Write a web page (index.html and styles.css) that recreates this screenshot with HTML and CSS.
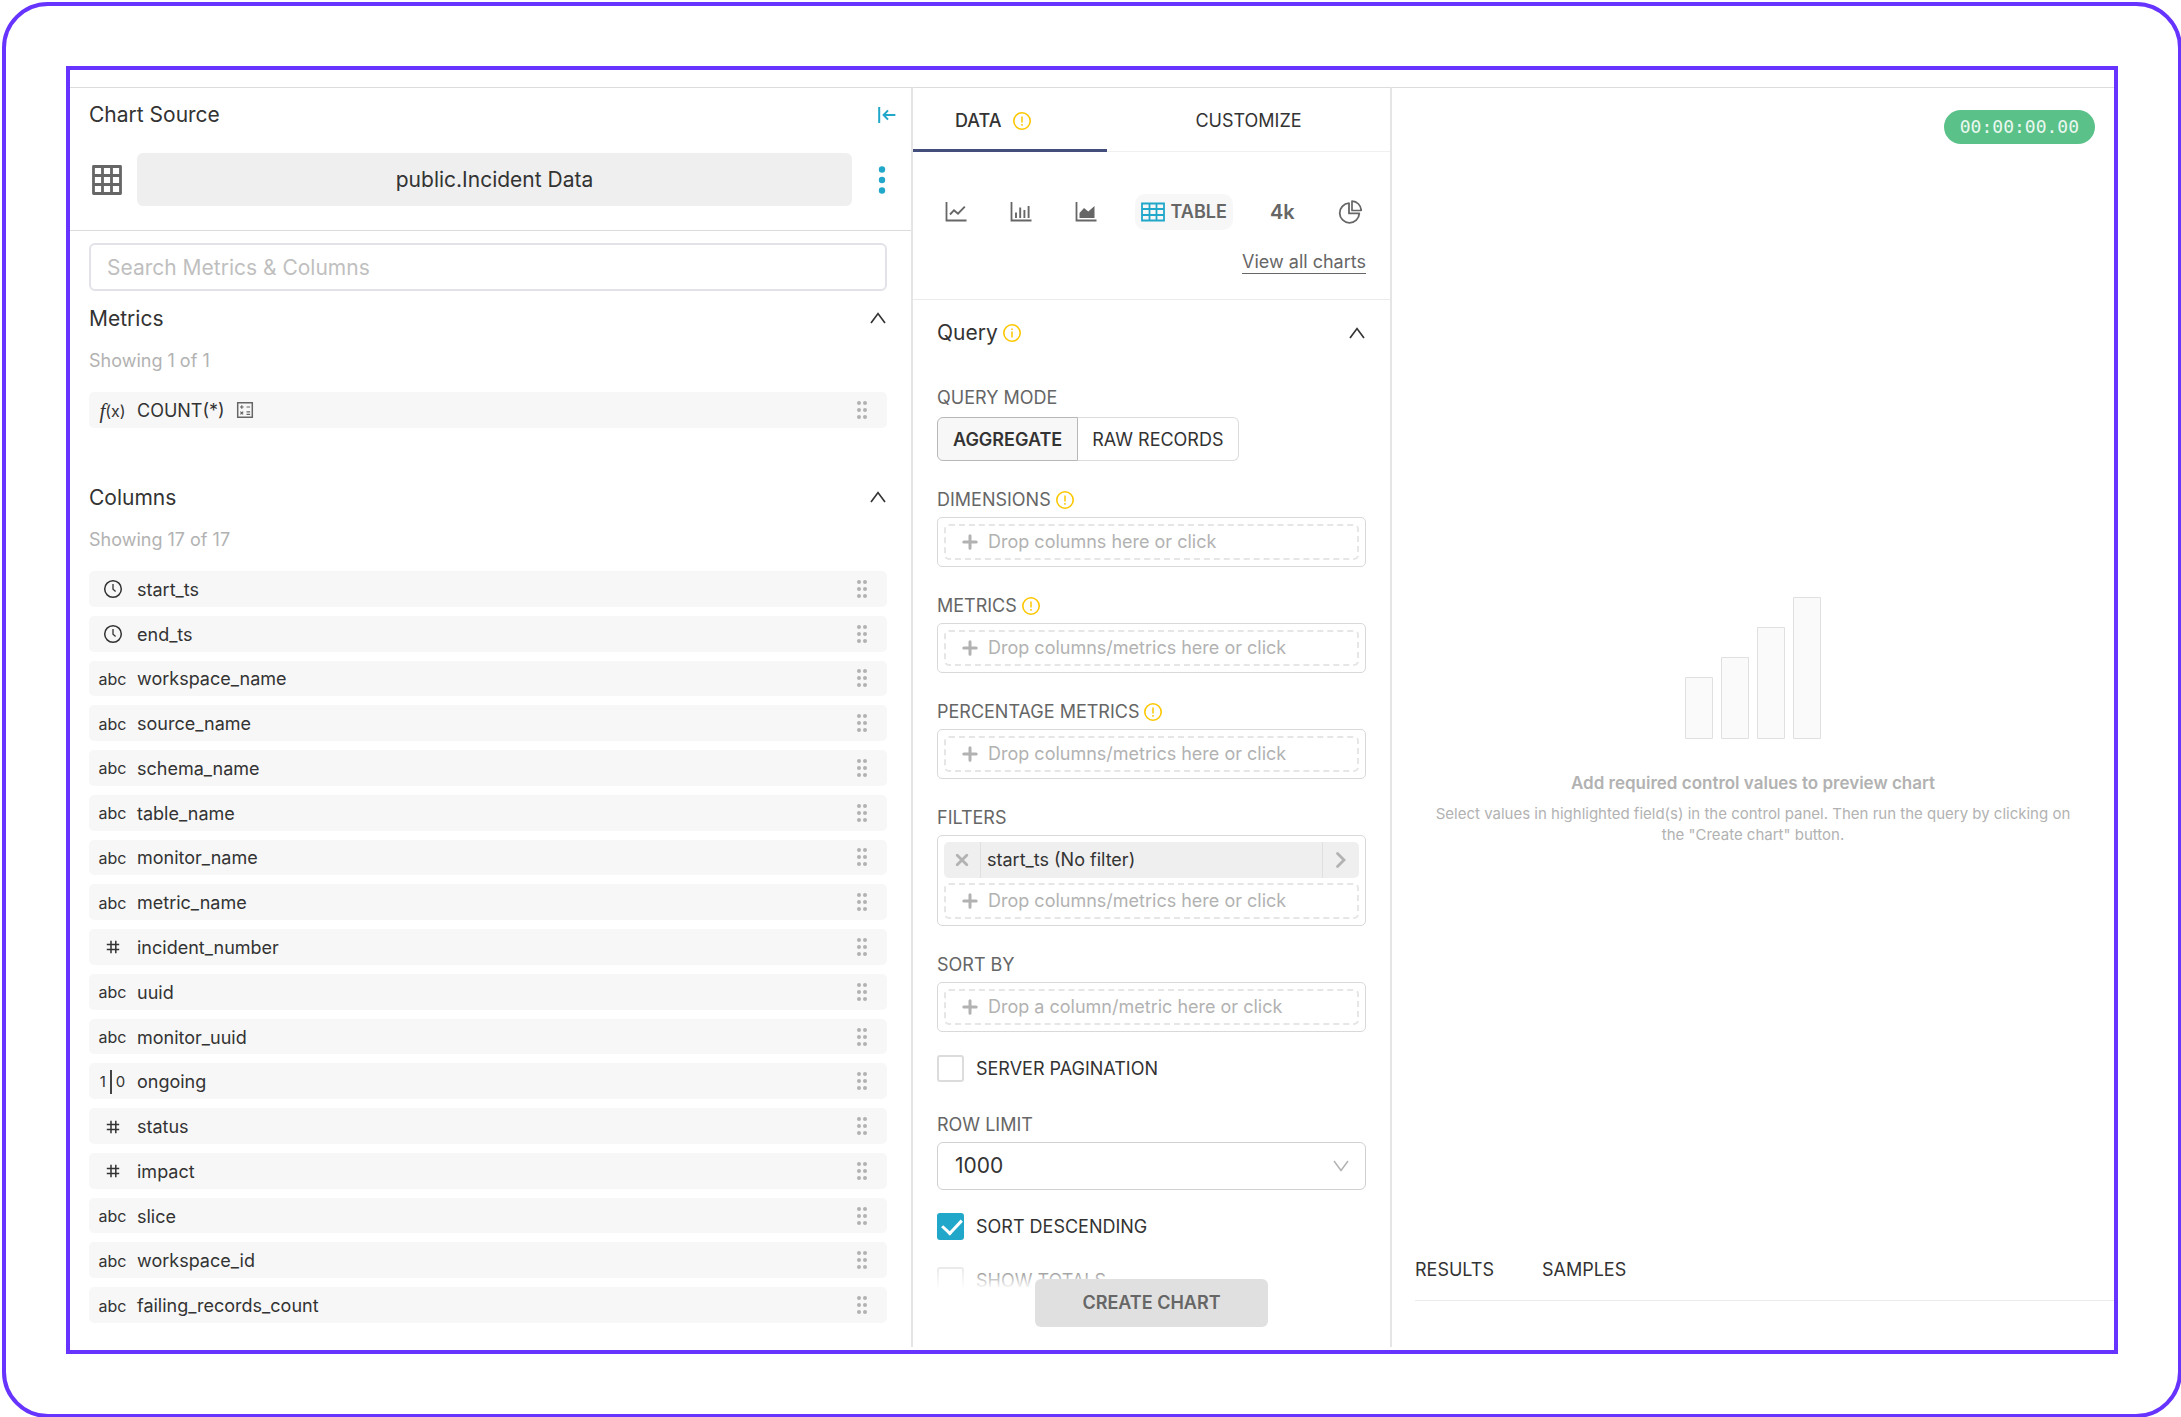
FILE: index.html
```html
<!DOCTYPE html>
<html lang="en">
<head>
  <meta charset="UTF-8">
  <meta name="viewport" content="width=device-width, initial-scale=1.0">
  <title>Create Chart</title>
  <link rel="stylesheet" href="styles.css">
</head>
<body>
  <!-- Shared icons -->
  <svg class="icon-defs" aria-hidden="true">
    <symbol id="icon-clock" viewBox="0 0 20 20">
      <circle cx="10" cy="10" r="8.3" fill="none" stroke="currentColor" stroke-width="1.5"/>
      <path d="M10 5v5.3l2.6 2.2" fill="none" stroke="currentColor" stroke-width="1.3"/>
    </symbol>
    <symbol id="icon-hash" viewBox="0 0 14 14">
      <path d="M5 .8v12.4M9.8 .8v12.4M.8 4.6h12.4M.8 9.4h12.4" fill="none" stroke="currentColor" stroke-width="1.5"/>
    </symbol>
    <symbol id="icon-drag" viewBox="0 0 12 20">
      <g fill="currentColor">
        <circle cx="3" cy="3" r="2"/><circle cx="9" cy="3" r="2"/>
        <circle cx="3" cy="10" r="2"/><circle cx="9" cy="10" r="2"/>
        <circle cx="3" cy="17" r="2"/><circle cx="9" cy="17" r="2"/>
      </g>
    </symbol>
    <symbol id="icon-up" viewBox="0 0 16 12">
      <path d="M1 11l7-9.4L15 11" fill="none" stroke="currentColor" stroke-width="1.7"/>
    </symbol>
    <symbol id="icon-alert" viewBox="0 0 20 20">
      <circle cx="10" cy="10" r="8.2" fill="none" stroke="currentColor" stroke-width="1.6"/>
      <path d="M10 5.4v6M10 13v1.7" fill="none" stroke="currentColor" stroke-width="1.5"/>
    </symbol>
    <symbol id="icon-info" viewBox="0 0 20 20">
      <circle cx="10" cy="10" r="8.2" fill="none" stroke="currentColor" stroke-width="1.6"/>
      <path d="M10 8.6v6M10 5.4v1.7" fill="none" stroke="currentColor" stroke-width="1.5"/>
    </symbol>
    <symbol id="icon-plus" viewBox="0 0 16 16">
      <path d="M8 1.8v12.4M1.8 8h12.4" fill="none" stroke="currentColor" stroke-width="3" stroke-linecap="round"/>
    </symbol>
  </svg>

  <div class="card">
    <div class="explore">

      <!-- Chart source -->
      <div class="source-panel">
        <div class="source-header">
          <div class="source-title">
            <span>Chart Source</span>
            <button class="icon-button link-color" aria-label="Collapse">
              <svg width="18" height="18" viewBox="0 0 18 18"><path d="M1.2 1v16M17.4 9H6M10 4.4L5.6 9l4.4 4.6" fill="none" stroke="currentColor" stroke-width="2"/></svg>
            </button>
          </div>
          <div class="dataset">
            <svg width="30" height="30" viewBox="0 0 30 30"><path d="M1.5 1.5h27v27h-27zM10.5 1.5v27M19.5 1.5v27M1.5 10.5h27M1.5 19.5h27" fill="none" stroke="#666" stroke-width="2.8" stroke-linejoin="round"/></svg>
            <button class="dataset-name">public.Incident Data</button>
            <button class="icon-button link-color dataset-menu" aria-label="Dataset menu">
              <svg width="8" height="28" viewBox="0 0 8 28"><g fill="currentColor"><circle cx="4" cy="3.5" r="3.2"/><circle cx="4" cy="14" r="3.2"/><circle cx="4" cy="24.5" r="3.2"/></g></svg>
            </button>
          </div>
        </div>

        <div class="source-body">
          <input class="search" type="text" placeholder="Search Metrics &amp; Columns" aria-label="Search Metrics &amp; Columns">

          <div class="section-header">
            <span>Metrics</span>
            <button class="icon-button" aria-label="Toggle metrics"><svg width="16" height="12"><use href="#icon-up"/></svg></button>
          </div>
          <div class="section-count">Showing 1 of 1</div>
          <div class="option-list metrics-list">
            <div class="option">
              <span class="option-type fx"><i>f</i>(x)</span>
              <span class="option-name">COUNT(*)</span>
              <svg class="calc" width="18" height="18" viewBox="0 0 18 18"><path d="M1.7 1.7h14.6v14.6H1.7z" fill="none" stroke="#666" stroke-width="1.5"/><path d="M4 6h3.6M5.8 4.2v3.6M10.5 6h3.6M4.4 10.6l2.8 2.8M7.2 10.6l-2.8 2.8M10.5 10.9h3.6M10.5 13.3h3.6" fill="none" stroke="#666" stroke-width="1.2"/></svg>
              <svg class="drag" width="12" height="20"><use href="#icon-drag"/></svg>
            </div>
          </div>

          <div class="section-header columns-header">
            <span>Columns</span>
            <button class="icon-button" aria-label="Toggle columns"><svg width="16" height="12"><use href="#icon-up"/></svg></button>
          </div>
          <div class="section-count">Showing 17 of 17</div>
          <div class="option-list columns-list">
            <div class="option"><span class="option-type"><svg width="20" height="20"><use href="#icon-clock"/></svg></span><span class="option-name">start_ts</span><svg class="drag" width="12" height="20"><use href="#icon-drag"/></svg></div>
            <div class="option"><span class="option-type"><svg width="20" height="20"><use href="#icon-clock"/></svg></span><span class="option-name">end_ts</span><svg class="drag" width="12" height="20"><use href="#icon-drag"/></svg></div>
            <div class="option"><span class="option-type">abc</span><span class="option-name">workspace_name</span><svg class="drag" width="12" height="20"><use href="#icon-drag"/></svg></div>
            <div class="option"><span class="option-type">abc</span><span class="option-name">source_name</span><svg class="drag" width="12" height="20"><use href="#icon-drag"/></svg></div>
            <div class="option"><span class="option-type">abc</span><span class="option-name">schema_name</span><svg class="drag" width="12" height="20"><use href="#icon-drag"/></svg></div>
            <div class="option"><span class="option-type">abc</span><span class="option-name">table_name</span><svg class="drag" width="12" height="20"><use href="#icon-drag"/></svg></div>
            <div class="option"><span class="option-type">abc</span><span class="option-name">monitor_name</span><svg class="drag" width="12" height="20"><use href="#icon-drag"/></svg></div>
            <div class="option"><span class="option-type">abc</span><span class="option-name">metric_name</span><svg class="drag" width="12" height="20"><use href="#icon-drag"/></svg></div>
            <div class="option"><span class="option-type"><svg width="14" height="14"><use href="#icon-hash"/></svg></span><span class="option-name">incident_number</span><svg class="drag" width="12" height="20"><use href="#icon-drag"/></svg></div>
            <div class="option"><span class="option-type">abc</span><span class="option-name">uuid</span><svg class="drag" width="12" height="20"><use href="#icon-drag"/></svg></div>
            <div class="option"><span class="option-type">abc</span><span class="option-name">monitor_uuid</span><svg class="drag" width="12" height="20"><use href="#icon-drag"/></svg></div>
            <div class="option"><span class="option-type bool"><span>1</span><span class="bar"></span><span>0</span></span><span class="option-name">ongoing</span><svg class="drag" width="12" height="20"><use href="#icon-drag"/></svg></div>
            <div class="option"><span class="option-type"><svg width="14" height="14"><use href="#icon-hash"/></svg></span><span class="option-name">status</span><svg class="drag" width="12" height="20"><use href="#icon-drag"/></svg></div>
            <div class="option"><span class="option-type"><svg width="14" height="14"><use href="#icon-hash"/></svg></span><span class="option-name">impact</span><svg class="drag" width="12" height="20"><use href="#icon-drag"/></svg></div>
            <div class="option"><span class="option-type">abc</span><span class="option-name">slice</span><svg class="drag" width="12" height="20"><use href="#icon-drag"/></svg></div>
            <div class="option"><span class="option-type">abc</span><span class="option-name">workspace_id</span><svg class="drag" width="12" height="20"><use href="#icon-drag"/></svg></div>
            <div class="option"><span class="option-type">abc</span><span class="option-name">failing_records_count</span><svg class="drag" width="12" height="20"><use href="#icon-drag"/></svg></div>
          </div>
        </div>
      </div>

      <!-- Controls -->
      <div class="control-panel">
        <div class="tabs">
          <button class="tab active">DATA <svg class="warn" width="20" height="20"><use href="#icon-alert"/></svg></button>
          <button class="tab">CUSTOMIZE</button>
        </div>

        <div class="chart-picker">
          <div class="chart-types">
            <button class="chart-type" aria-label="Line chart">
              <svg width="22" height="20" viewBox="0 0 22 20"><path d="M1.5 0v18.5h20" fill="none" stroke="currentColor" stroke-width="1.8"/><path d="M5 12.5l4-4.3 4 3.5 6.8-7" fill="none" stroke="currentColor" stroke-width="1.9"/></svg>
            </button>
            <button class="chart-type" aria-label="Bar chart">
              <svg width="22" height="20" viewBox="0 0 22 20"><path d="M1.5 0v18.5h20" fill="none" stroke="currentColor" stroke-width="1.8"/><path d="M6 10.5V16M10.200 5.500V16M14.400 8v8M18.600 4v12" fill="none" stroke="currentColor" stroke-width="1.9"/></svg>
            </button>
            <button class="chart-type" aria-label="Area chart">
              <svg width="22" height="20" viewBox="0 0 22 20"><path d="M1.5 0v18.5h20" fill="none" stroke="currentColor" stroke-width="1.8"/><path d="M4.5 16v-5L9 6l4.300 3.600L19.500 4v12z" fill="currentColor"/></svg>
            </button>
            <button class="chart-type selected">
              <svg width="24" height="20" viewBox="0 0 24 20"><path d="M1 1.500h22v17H1zM8.500 1.500v17M15.500 1.500v17M1 7h22M1 13h22" fill="none" stroke="#20a7c9" stroke-width="1.8"/></svg>
              TABLE
            </button>
            <button class="chart-type big-number">4k</button>
            <button class="chart-type" aria-label="Pie chart">
              <svg width="24" height="24" viewBox="0 0 24 24"><path d="M11 3.200a9.800 9.800 0 1 0 10.300 10.200H11z" fill="none" stroke="currentColor" stroke-width="1.8" stroke-linejoin="round"/><path d="M14 1.200v9.300h9.200A9.400 9.400 0 0 0 14 1.200z" fill="none" stroke="currentColor" stroke-width="1.7" stroke-linejoin="round"/></svg>
            </button>
          </div>
          <a class="view-all" href="#">View all charts</a>
        </div>

        <div class="controls">
          <div class="section-header query-header">
            <span class="with-icon">Query <svg class="warn" width="20" height="20"><use href="#icon-info"/></svg></span>
            <button class="icon-button" aria-label="Toggle query"><svg width="16" height="12"><use href="#icon-up"/></svg></button>
          </div>

          <div class="field mode-field">
            <span class="field-label">QUERY MODE</span>
            <div class="mode-group">
              <button class="mode active">AGGREGATE</button>
              <button class="mode">RAW RECORDS</button>
            </div>
          </div>

          <div class="field">
            <label class="field-label" for="dimensions">DIMENSIONS <svg class="warn" width="20" height="20"><use href="#icon-alert"/></svg></label>
            <div class="drop-box">
              <button class="drop-zone" id="dimensions"><svg width="16" height="16"><use href="#icon-plus"/></svg>Drop columns here or click</button>
            </div>
          </div>

          <div class="field">
            <label class="field-label" for="metrics">METRICS <svg class="warn" width="20" height="20"><use href="#icon-alert"/></svg></label>
            <div class="drop-box">
              <button class="drop-zone" id="metrics"><svg width="16" height="16"><use href="#icon-plus"/></svg>Drop columns/metrics here or click</button>
            </div>
          </div>

          <div class="field">
            <label class="field-label" for="percentage">PERCENTAGE METRICS <svg class="warn" width="20" height="20"><use href="#icon-alert"/></svg></label>
            <div class="drop-box">
              <button class="drop-zone" id="percentage"><svg width="16" height="16"><use href="#icon-plus"/></svg>Drop columns/metrics here or click</button>
            </div>
          </div>

          <div class="field">
            <label class="field-label" for="filters">FILTERS</label>
            <div class="drop-box">
              <div class="filter">
                <button class="filter-remove" aria-label="Remove filter"><svg width="14" height="14" viewBox="0 0 14 14"><path d="M2.2 2.2l9.600 9.600M11.800 2.200l-9.600 9.600" fill="none" stroke="currentColor" stroke-width="2.800" stroke-linecap="round"/></svg></button>
                <span class="filter-name">start_ts (No filter)</span>
                <button class="filter-open" aria-label="Edit filter"><svg width="12" height="18" viewBox="0 0 12 18"><path d="M2.500 2.500L9 9l-6.500 6.500" fill="none" stroke="currentColor" stroke-width="2.800" stroke-linecap="round"/></svg></button>
              </div>
              <button class="drop-zone" id="filters"><svg width="16" height="16"><use href="#icon-plus"/></svg>Drop columns/metrics here or click</button>
            </div>
          </div>

          <div class="field">
            <label class="field-label" for="sort-by">SORT BY</label>
            <div class="drop-box">
              <button class="drop-zone" id="sort-by"><svg width="16" height="16"><use href="#icon-plus"/></svg>Drop a column/metric here or click</button>
            </div>
          </div>

          <label class="check"><input type="checkbox">SERVER PAGINATION</label>

          <div class="field">
            <label class="field-label" for="row-limit">ROW LIMIT</label>
            <div class="select-box">
              <select id="row-limit">
                <option>1000</option>
              </select>
              <svg class="caret" width="16" height="12" viewBox="0 0 16 12"><path d="M1 1l7 9.400L15 1" fill="none" stroke="#b2b2b2" stroke-width="1.5"/></svg>
            </div>
          </div>

          <label class="check"><input type="checkbox" checked>SORT DESCENDING</label>
          <label class="check"><input type="checkbox">SHOW TOTALS</label>
        </div>

        <div class="control-footer">
          <button class="create-chart" disabled>CREATE CHART</button>
        </div>
      </div>

      <!-- Chart preview -->
      <div class="preview-panel">
        <div class="preview-header">
          <span class="timer">00:00:00.00</span>
        </div>
        <div class="empty-state">
          <svg width="138" height="144" viewBox="0 0 138 144"><path d="M1.500 81.500h27v61h-27zM37.500 61.500h27v81h-27zM73.500 31.500h27v111h-27zM109.500 1.500h27v141h-27z" fill="#fafafa" stroke="#e0e0e0"/></svg>
          <div class="empty-title">Add required control values to preview chart</div>
          <div class="empty-text">Select values in highlighted field(s) in the control panel. Then run the query by clicking on the "Create chart" button.</div>
        </div>
        <div class="results-tabs">
          <button class="result-tab">RESULTS</button>
          <button class="result-tab">SAMPLES</button>
        </div>
      </div>

    </div>
  </div>
</body>
</html>
```

FILE: styles.css
```css
* {
  box-sizing: border-box;
}

body {
  margin: 0;
  height: 100vh;
  overflow: hidden;
  background-color: #fff;
  color: #333;
  font-family: Inter, sans-serif;
  font-size: 18px;
  line-height: 24px;
}

button,
input,
select {
  font: inherit;
  color: inherit;
}

button {
  border: none;
  background: none;
  padding: 0;
  cursor: pointer;
}

svg {
  display: block;
  flex: none;
}

.icon-defs {
  position: absolute;
  width: 0;
  height: 0;
}

/* Frame */
.card {
  display: flex;
  height: calc(100vh - 1px);
  margin: 2px -1px 0 2px;
  padding: 60px;
  border: 4px solid #6633ff;
  border-radius: 46px;
}

.explore {
  flex: 1;
  display: grid;
  grid-template-columns: 843fr 479fr 722fr;
  grid-template-rows: minmax(0, 1fr);
  border: 4px solid #6633ff;
  padding: 17px 0 3px;
}

.source-panel,
.control-panel,
.preview-panel {
  display: flex;
  flex-direction: column;
  min-width: 0;
  border-top: 1px solid #dcdcdc;
}

.source-panel,
.control-panel {
  border-right: 2px solid #e5e5e5;
}

.icon-button {
  display: flex;
}

.link-color {
  color: #20a7c9;
}

/* Chart source */
.source-header {
  padding: 13px 15px 24px 19px;
  border-bottom: 1px solid #dcdcdc;
}

.source-title {
  display: flex;
  justify-content: space-between;
  align-items: center;
  font-size: 21px;
  line-height: 28px;
}

.dataset {
  display: flex;
  align-items: center;
  margin-top: 24px;
  padding-left: 3px;
}

.dataset-name {
  flex: 1;
  height: 53px;
  margin: 0 26px 0 15px;
  background-color: #efefef;
  border-radius: 6px;
  font-size: 21px;
}

.dataset-menu {
  margin-right: 10px;
}

.source-body {
  flex: 1;
  display: flex;
  flex-direction: column;
  padding: 12px 24px 24px 19px;
}

.source-body .icon-button {
  padding-bottom: 3px;
}

.search {
  width: 100%;
  height: 48px;
  padding: 0 16px;
  border: 2px solid #e2e2e8;
  border-radius: 6px;
  font-size: 21px;
}

.search::placeholder {
  color: #bfbfbf;
}

.section-header {
  display: flex;
  justify-content: space-between;
  align-items: center;
  margin-top: 14px;
  padding-right: 1px;
  font-size: 21px;
  line-height: 28px;
}

.columns-header {
  margin-top: 56px;
}

.section-count {
  margin-top: 16px;
  color: #b2b2b2;
}

.option-list {
  display: grid;
  gap: 9px;
  margin-top: 19px;
}

.metrics-list {
  grid-auto-rows: 36px;
}

.columns-list {
  flex: 1;
  grid-auto-rows: 1fr;
}

.option {
  display: flex;
  align-items: center;
  padding: 0 19px 0 8px;
  background-color: #f7f7f7;
  border-radius: 5px;
  line-height: 20px;
}

.option-name {
  padding-top: 2px;
}

.option-type {
  display: flex;
  justify-content: center;
  align-items: center;
  width: 31px;
  margin-right: 9px;
  padding-top: 1px;
  font-size: 16px;
}

.fx i {
  font-family: "Liberation Serif", serif;
  font-size: 21px;
}

.bool {
  gap: 4px;
  font-size: 15px;
}

.bar {
  width: 2px;
  height: 24px;
  background-color: #444;
}

.calc {
  margin-left: 11px;
}

.drag {
  margin-left: auto;
  color: #b2b2b2;
}

/* Controls */
.control-panel {
  position: relative;
}

.tabs {
  display: grid;
  grid-template-columns: 194fr 283fr;
  height: 64px;
  border-bottom: 1px solid #f0f0f0;
}

.tab {
  height: 64px;
  padding-top: 4px;
  border-bottom: 3px solid transparent;
}

.tab.active {
  display: flex;
  align-items: center;
  gap: 10px;
  padding-left: 42px;
  border-bottom-color: #444e7c;
  font-weight: 500;
}

.warn {
  color: #fcc700;
}

.chart-picker {
  display: flex;
  flex-direction: column;
  padding: 42px 24px 25px;
  border-bottom: 1px solid #ebebeb;
}

.chart-types {
  display: flex;
  justify-content: space-between;
  margin: 0 -2px 0 2px;
}

.chart-type {
  display: flex;
  align-items: center;
  gap: 6px;
  height: 36px;
  padding: 0 6px;
  border-radius: 10px;
  color: #666;
  font-weight: 600;
}

.chart-type.selected {
  background-color: #f7f7f7;
}

.big-number {
  font-size: 20px;
}

.view-all {
  align-self: flex-end;
  margin-top: 20px;
  color: #666;
  text-underline-offset: 5px;
}

.controls {
  flex: 1;
  display: flex;
  flex-direction: column;
  min-height: 0;
  overflow: hidden;
  padding: 19px 24px 0;
}

.controls > * {
  flex: none;
}

.query-header {
  margin-top: 0;
}

.with-icon {
  display: flex;
  align-items: center;
  gap: 4px;
}

.field {
  margin-top: 27px;
}

.field-label {
  display: flex;
  align-items: center;
  gap: 4px;
  margin-bottom: 5px;
  color: #666;
}

.mode-field {
  margin-top: 39px;
}

.mode-group {
  display: flex;
  padding-top: 2px;
}

.mode {
  height: 44px;
  padding: 2px 14px 0;
  border: 1px solid #dcdcdc;
  border-left: none;
  border-radius: 0 6px 6px 0;
}

.mode.active {
  padding: 2px 15px 0;
  border: 1px solid #b8b8b8;
  border-radius: 6px 0 0 6px;
  background-color: #f7f7f7;
  font-weight: 600;
}

.drop-box {
  display: grid;
  gap: 5px;
  padding: 6px;
  border: 1px solid #d9d9d9;
  border-radius: 5px;
}

.drop-zone {
  display: flex;
  align-items: center;
  gap: 10px;
  height: 36px;
  padding-left: 16px;
  border: 2px dashed #e6e6e6;
  border-radius: 5px;
  color: #b2b2b2;
}

.filter {
  display: flex;
  height: 36px;
  background-color: #efefef;
  border-radius: 5px;
}

.filter-remove,
.filter-open {
  display: flex;
  justify-content: center;
  align-items: center;
  width: 36px;
  color: #b2b2b2;
}

.filter-name {
  flex: 1;
  padding-left: 6px;
  border: solid #e0e0e0;
  border-width: 0 1px;
  line-height: 36px;
}

.check {
  display: flex;
  align-items: center;
  gap: 12px;
  margin: 23px 0 4px;
}

.check input {
  appearance: none;
  position: relative;
  width: 27px;
  height: 27px;
  margin: 0;
  border: 2px solid #dcdcdc;
  border-radius: 3px;
}

.check input:checked {
  border-color: #20a7c9;
  background-color: #20a7c9;
}

.check input:checked::after {
  content: "";
  position: absolute;
  left: 7px;
  top: 0;
  width: 9px;
  height: 16px;
  border: solid #fff;
  border-width: 0 3px 3px 0;
  transform: rotate(43deg);
}

.select-box {
  position: relative;
}

.select-box select {
  appearance: none;
  width: 100%;
  height: 48px;
  padding: 0 17px;
  border: 1px solid #d0d0d0;
  border-radius: 6px;
  background-color: #fff;
  font-size: 21px;
}

.caret {
  position: absolute;
  top: 18px;
  right: 17px;
  pointer-events: none;
}

.control-footer {
  position: absolute;
  left: 0;
  right: 0;
  bottom: 0;
  display: flex;
  justify-content: center;
  padding: 25px 0 20px;
  background: linear-gradient(rgba(255, 255, 255, 0), #fff 35px);
}

.create-chart {
  width: 233px;
  height: 48px;
  background-color: #e0e0e0;
  border-radius: 6px;
  color: #666;
  font-weight: 600;
}

/* Chart preview */
.preview-header {
  display: flex;
  justify-content: flex-end;
  padding: 22px 19px 0;
}

.timer {
  padding: 0 16px;
  background-color: #5ac189;
  border-radius: 17px;
  color: #eaf8f0;
  font-family: "DejaVu Sans Mono", monospace;
  line-height: 34px;
}

.empty-state {
  flex: 1;
  display: flex;
  flex-direction: column;
  justify-content: center;
  align-items: center;
  padding: 56px 40px 0;
  color: #b2b2b2;
  text-align: center;
}

.empty-title {
  margin-top: 31px;
  font-size: 17px;
  font-weight: 600;
}

.empty-text {
  margin-top: 8px;
  font-size: 15px;
  line-height: 21px;
}

.results-tabs {
  display: flex;
  gap: 48px;
  height: 61px;
  margin: 0 0 46px 23px;
  border-bottom: 1px solid #ebebeb;
}
```
